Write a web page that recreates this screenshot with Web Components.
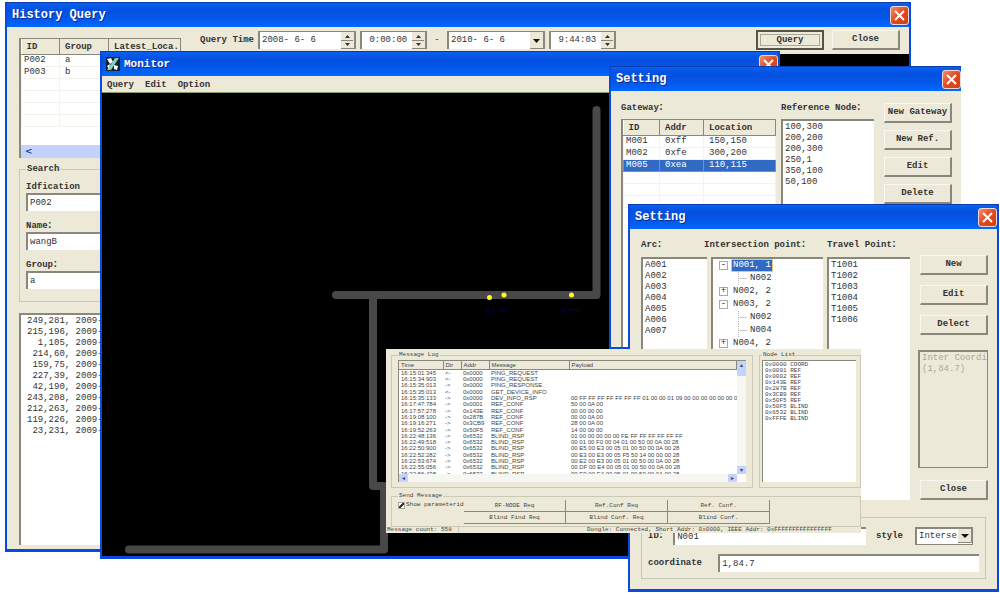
<!DOCTYPE html>
<html lang="en">
<head>
<meta charset="utf-8">
<title>Location monitor</title>
<style>
html, body { margin: 0; background: #fff; }
body { font: 9px/11px "Liberation Mono", "Noto Sans CJK SC", monospace; color: #333; }
</style>
</head>
<body>
<location-desktop></location-desktop>
<script>
const define = (name, html, setup) => {
  const template = document.createElement('template');
  template.innerHTML = `<style>
    *, *::before { box-sizing: border-box; }
    :host { display: block; box-sizing: border-box; }
    input, select, button { font: inherit; color: inherit; margin: 0; border-radius: 0; }
  </style>` + html;
  customElements.define(name, class extends HTMLElement {
    constructor() {
      super();
      this.attachShadow({ mode: 'open' }).append(template.content.cloneNode(true));
    }
    connectedCallback() { if (setup) setup(this, this.shadowRoot); }
  });
};

/* Window frame with a blue title bar and a close button */
define('xp-window', `<style>
  :host { display: flex; flex-direction: column; background: #ece9d8; border: solid #0a48e0; border-width: 1px 2px 3px; border-top-color: #0a3ab0; }
  header { display: flex; align-items: center; gap: 4px; flex: none; height: 24px; padding: 0 0 0 5px;
    background: linear-gradient(#0a60f0, #0450e0 30%, #0456e8 60%, #0068ff); color: #fff; font: bold 12px/16px "Liberation Mono", monospace; text-shadow: 1px 1px #0a2a90; }
  :host([compact]) header { font-size: 11px; }
  h2 { flex: 1; margin: 0; font: inherit; }
  button { width: 19px; height: 19px; padding: 0; border: 1px solid #f4d8d0; border-radius: 3px; background: linear-gradient(135deg, #f09070, #e04a20 50%, #d04010); }
  svg { display: block; margin: auto; }
  main { flex: 1; min-height: 0; display: flex; flex-direction: column; }
</style>
<header><slot name="icon"></slot><h2></h2><button type="button" aria-label="Close window"><svg width="13" height="13" viewBox="0 0 13 13"><path d="M2 2l9 9M11 2l-9 9" stroke="#fff" stroke-width="2"/></svg></button></header>
<main><slot></slot></main>`, (host, root) => { root.querySelector('h2').textContent = host.getAttribute('heading'); });

define('xp-button', `<style>
  button { display: block; width: 100%; height: 20px; padding: 0 2px; border: solid; border-width: 1px 2px 2px 1px; border-color: #faf8f0 #8a887c #8a887c #faf8f0; background: #ece9d8; white-space: nowrap; font-weight: bold; }
  :host([focused]) button { border: 2px solid #55534a; outline: 1px solid #aca899; outline-offset: -5px; }
  :host([small]) button { height: 12px; font-size: 6px; line-height: 8px; font-weight: normal; border-width: 0 1px 1px 0; }
</style><button type="button"><slot></slot></button>`);

/* Labelled text box; trim="spin" or trim="drop" adds the control at its right end */
define('xp-field', `<style>
  :host { display: flex; align-items: center; }
  :host([stacked]) { flex-direction: column; align-items: stretch; }
  label { font-weight: bold; flex: none; white-space: pre; line-height: 11px; height: 11px; }
  label:empty { display: none; }
  .box { display: flex; flex: 1 1 auto; min-width: 0; height: 18px; background: #fff; border: solid #8a887c; border-width: 2px 0 0 2px; }
  :host([stacked]) .box { flex: none; }
  input { flex: 1; width: 100%; min-width: 0; padding: 0 2px; border: 0; background: none; outline: 0; white-space: pre; }
  .end { display: none; flex: none; padding: 0; border: solid #8a887c; border-width: 0 1px 1px 0; background: #ece9d8; }
  :host([trim]) .box { border-width: 1px 1px 0 2px; }
  :host([trim]) input { padding-bottom: 1px; }
  :host([trim]) .end { display: block; width: 14px; }
</style><label for="i"></label><span class="box"><input id="i"><button class="end" type="button" aria-label="Change value"></button></span>`,
(host, root) => {
  root.querySelector('label').textContent = host.getAttribute('label') || '';
  const input = root.querySelector('input');
  input.value = host.getAttribute('value');
  input.setAttribute('aria-label', host.getAttribute('label') || host.getAttribute('hint') || 'Value');
  const trim = host.getAttribute('trim');
  if (trim) root.querySelector('.end').innerHTML = trim === 'drop'
    ? '<svg width="12" height="14" viewBox="0 0 12 14" style="display:block"><path d="M3 6h7l-3.500 4z" fill="#111"/></svg>'
    : '<svg width="12" height="14" viewBox="0 0 12 14" style="display:block"><path d="M4 5l2.500-3 2.500 3zM4 10l2.500 3 2.500-3z" fill="#333"/><path d="M0 7.500h13" stroke="#8a887c"/></svg>';
});

/* White sunken list; one row for each part of the rows attribute */
define('xp-list', `<style>
  :host { background: #fff; border: solid #8a887c; border-width: 2px 0 0 2px; overflow: hidden; }
  ul { list-style: none; margin: 0; padding: 1px 2px; white-space: pre; }
</style><ul></ul>`, (host, root) => {
  const ul = root.querySelector('ul');
  for (const line of host.getAttribute('rows').split('|')) {
    const li = document.createElement('li');
    li.textContent = line;
    ul.append(li);
  }
});

define('xp-group', `<style>
  fieldset { height: 100%; min-width: 0; margin: 0; padding: 0 6px; border: 1px solid #cbc8b6; }
  legend { padding: 0 1px; font-weight: bold; }
  :host([small]) legend { font-size: 6px; line-height: 8px; font-weight: normal; }
  :host([tight]) fieldset { padding: 0 4px 0 2px; }
  :host([plain]) legend { display: none; }
</style><fieldset><legend></legend><slot></slot></fieldset>`, (host, root) => {
  root.querySelector('legend').textContent = host.getAttribute('legend') || '';
});

/* Table with heading cells, ruled rows and an optional selected row */
define('xp-table', `<style>
  :host { background: #fff; border: solid #8a887c; border-width: 1px 0 0 2px; overflow: hidden; }
  table { width: 100%; table-layout: fixed; border-collapse: collapse; }
  th { height: 15px; padding: 2px 5px 0; text-align: left; background: #ece9d8; border: solid #8a887c; border-width: 0 1px 1px 0; white-space: nowrap; overflow: hidden; }
  td { height: 12px; padding: 0 5px 0 2px; border: 1px solid #f4f2ea; white-space: pre; overflow: hidden; }
  td:not(:first-child) { padding-left: 5px; }
  tr.on td { background: #316ac5; color: #fff; border-color: #6a90d0; }
</style><table><thead><tr></tr></thead><tbody></tbody></table><slot></slot>`, (host, root) => {
  const widths = host.getAttribute('widths').split(' ');
  const cells = (tr, tag, text) => text.split(';').forEach((t, i) => {
    const c = document.createElement(tag);
    c.textContent = t;
    if (tag === 'th' && widths[i] !== '*') c.style.width = widths[i] + 'px';
    tr.append(c);
  });
  cells(root.querySelector('thead tr'), 'th', host.getAttribute('head'));
  host.getAttribute('rows').split('|').forEach((row, i) => {
    const tr = document.createElement('tr');
    if (String(i) === host.getAttribute('selected')) tr.className = 'on';
    cells(tr, 'td', row);
    root.querySelector('tbody').append(tr);
  });
});

define('history-query', `<style>
  .grid { flex: 1; display: grid; grid-template-columns: 162px 1fr; column-gap: 9px; padding-left: 12px; }
  .left { display: flex; flex-direction: column; padding: 11px 0 4px; }
  xp-table { height: 120px; display: flex; flex-direction: column; }
  .scroll { margin-top: auto; height: 13px; display: flex; background: #c3d3fd; color: #23408c; font: bold 9px/12px "DejaVu Sans", sans-serif; padding-left: 4px; }
  .search { height: 138px; margin: 6px 0 11px; }
  .fields { display: grid; gap: 10px; padding-top: 7px; }
  .left xp-list { flex: 1; padding-left: 4px; }
  .right { display: flex; flex-direction: column; }
  .bar { display: flex; align-items: center; height: 26px; padding: 0 9px 0 10px; gap: 4px; }
  .date { width: 98px; } .time { width: 67px; }
  .bar .dash { width: 12px; text-align: center; }
  .bar xp-button { width: 68px; }
  .first { margin-left: auto; margin-right: 4px; }
  .map { flex: 1; background: #000; margin-top: 1px; }
</style>
<xp-window heading="History Query" style="height:100%"><div class="grid">
  <div class="left">
    <xp-table head="ID;Group;Latest_Loca." widths="38 49 *" rows="P002;a;|P003;b;| ;;| ;;| ;;| ;;"><div class="scroll">&lt;</div></xp-table>
    <xp-group class="search" legend="Search"><div class="fields">
      <xp-field stacked label="Idfication" value="P002"></xp-field>
      <xp-field stacked label="Name：" value="wangB"></xp-field>
      <xp-field stacked label="Group：" value="a"></xp-field>
    </div></xp-group>
    <xp-list rows="249,281, 2009-|215,196, 2009-|  1,105, 2009-| 214,60, 2009-| 159,75, 2009-| 227,39, 2009-| 42,190, 2009-|243,208, 2009-|212,263, 2009-|119,226, 2009-| 23,231, 2009-"></xp-list>
  </div>
  <div class="right">
    <div class="bar"><b>Query Time</b>
      <xp-field class="date" trim="spin" hint="From date" value="2008- 6- 6"></xp-field>
      <xp-field class="time" trim="spin" hint="From time" value=" 0:00:00"></xp-field>
      <span class="dash">-</span>
      <xp-field class="date" trim="drop" hint="To date" value="2010- 6- 6"></xp-field>
      <xp-field class="time" trim="spin" hint="To time" value=" 9:44:03"></xp-field>
      <xp-button class="first" focused>Query</xp-button><xp-button>Close</xp-button>
    </div>
    <div class="map"></div>
  </div>
</div></xp-window>`);

define('monitor-window', `<style>
  nav { display: flex; gap: 11px; height: 17px; padding: 4px 5px 0; border-bottom: 1px solid #8a9a60; }
  a { color: inherit; text-decoration: none; font-weight: bold; }
  .plan { display: block; flex: 1; background: #000; }
</style>
<xp-window compact heading="Monitor" style="height:100%">
  <svg slot="icon" width="14" height="14" viewBox="0 0 14 14" style="margin-left:-1px"><rect width="14" height="14" fill="#123"/><path d="M1 2l4-1 2 4-3 2zM8 8l4 1-1 4-3-1z" fill="#fff"/><path d="M9 1h4L5 13H1z" fill="#7fd0b8"/><path d="M1 9l3-2-1 5z" fill="#fff"/></svg>
  <nav><a href="#query">Query</a><a href="#edit">Edit</a><a href="#option">Option</a></nav>
  <svg class="plan" viewBox="102 93 676 463" preserveAspectRatio="xMinYMin slice" role="img" aria-label="Floor plan">
    <g fill="none" stroke="#484848" stroke-width="8" stroke-linecap="round" stroke-linejoin="round">
      <path d="M596.500 110V295H336"/><path d="M373 295V486H384V549.500H129"/>
    </g>
    <g fill="#ff2"><circle cx="489.500" cy="297.500" r="2.500"/><circle cx="504" cy="295" r="2.500"/><circle cx="571.500" cy="295" r="2.500"/></g>
    <g fill="#000028"><path d="M486 308h3v5h-3zM493 307h2v6h-2zM500 308h6v4h-6zM561 308h4v5h-4zM568 309h6v2h-6zM577 307h2v5h-2z"/></g>
  </svg>
</xp-window>`);

define('gateway-setting', `<style>
  .row { flex: 1; display: grid; grid-template-columns: 155px 93px 68px; gap: 5px; padding: 12px 10px 0; }
  .col { display: flex; flex-direction: column; gap: 5px; }
  .col > :last-child { flex: 1; }
  .col b { white-space: nowrap; height: 11px; }
  .buttons { display: flex; flex-direction: column; gap: 7px; padding-left: 5px; width: 73px; }
</style>
<xp-window heading="Setting" style="height:100%; border-right-width:0"><div class="row">
  <div class="col"><b>Gateway：</b><xp-table head="ID;Addr;Location" widths="36 44 *" selected="2" rows="M001;0xff;150,150|M002;0xfe;300,200|M005;0xea;110,115| ;;| ;;| ;;"></xp-table></div>
  <div class="col"><b>Reference Node：</b><xp-list rows="100,300|200,200|200,300|250,1|350,100|50,100"></xp-list></div>
  <div class="buttons"><xp-button>New Gateway</xp-button><xp-button>New Ref.</xp-button><xp-button>Edit</xp-button><xp-button>Delete</xp-button></div>
</div></xp-window>`);

/* Tree of intersection points with expand boxes and dotted branches */
define('point-tree', `<style>
  :host { background: #fff; border: solid #8a887c; border-width: 2px 0 0 2px; overflow: hidden; padding-left: 6px; }
  ul { list-style: none; margin: 0; padding: 0; }
  li { display: flex; align-items: center; gap: 5px; height: 13px; white-space: pre; }
  li.child { padding-left: 19px; gap: 2px; }
  li.child::before { content: ""; width: 10px; height: 13px; border: dotted #bbb; border-width: 0 0 0 1px; background: linear-gradient(#ccc, #ccc) 0 6px / 8px 1px no-repeat; }
  button { width: 9px; height: 9px; padding: 0; border: 1px solid #aaa; background: #fff; font: 9px/7px "Liberation Mono", monospace; }
  .on { background: #316ac5; color: #fff; outline: 1px solid #e8c878; padding: 0 1px; margin-left: -1px; }
</style><ul>
<li><button type="button">-</button><span class="on">N001, 1</span></li><li class="child">N002</li>
<li><button type="button">+</button>N002, 2</li>
<li><button type="button">-</button>N003, 2</li><li class="child">N002</li><li class="child">N004</li>
<li><button type="button">+</button>N004, 2</li></ul>`);

define('point-setting', `<style>
  .body { flex: 1; display: flex; flex-direction: column; gap: 17px; padding: 11px 11px 10px; }
  .top { display: grid; grid-template-columns: 66px 112px 83px 71px; column-gap: 4px; height: 260px; }
  .col { display: flex; flex-direction: column; gap: 6px; min-width: 0; }
  .col > :last-child { flex: 1; }
  .col b { white-space: nowrap; height: 11px; }
  .col.mid b { margin-left: -7px; }
  .buttons { display: flex; flex-direction: column; gap: 10px; padding: 15px 0 0 4px; width: 74px; }
  .buttons xp-button { padding-left: 2px; }
  .note { flex: 1; margin: 5px 0 2px; padding: 1px 2px; border: solid #8a887c; border-width: 2px 1px 1px 2px; color: #aca899; white-space: pre; overflow: hidden; }
  xp-group { flex: 1; }
  .line { display: flex; align-items: center; padding-top: 9px; }
  .id { flex: 1; }
  label { font-weight: bold; margin: 0 12px 0 10px; }
  .combo { display: flex; position: relative; width: 58px; margin-right: 6px; }
  select { appearance: none; width: 100%; height: 18px; padding: 0 0 0 2px; border: solid #8a887c; border-width: 2px 1px 1px 2px; background: #fff; }
  .combo svg { position: absolute; right: 1px; top: 2px; pointer-events: none; }
</style>
<xp-window heading="Setting" style="height:100%"><div class="body">
  <div class="top">
    <div class="col"><b>Arc：</b><xp-list rows="A001|A002|A003|A004|A005|A006|A007"></xp-list></div>
    <div class="col mid"><b>Intersection point：</b><point-tree></point-tree></div>
    <div class="col"><b>Travel Point：</b><xp-list rows="T1001|T1002|T1003|T1004|T1005|T1006"></xp-list></div>
    <div class="buttons"><xp-button>New</xp-button><xp-button>Edit</xp-button><xp-button>Delect</xp-button>
      <div class="note">Inter Coordi
(1,84.7)</div><xp-button>Close</xp-button></div>
  </div>
  <xp-group plain>
    <div class="line"><xp-field class="id" label="ID： " value="N001"></xp-field><label for="style">style</label>
      <span class="combo"><select id="style"><option>Interse</option></select><svg width="14" height="14" viewBox="0 0 14 14"><path d="M0 0h14v14H0z" fill="#ece9d8"/><path d="M0 13.500h13.500V0" fill="none" stroke="#8a887c"/><path d="M3 5h8l-4 4z" fill="#111"/></svg></span></div>
    <div class="line"><xp-field class="id" label="coordinate   " value="1,84.7"></xp-field></div>
  </xp-group>
</div></xp-window>`);

const fs = '00 05 01 00 50 00 0A 00 28';
const logRows = [
  ['16:15:01:345', '<-', '0x0000', 'PING_REQUEST', ''], ['16:15:34:903', '<-', '0x0000', 'PING_REQUEST', ''],
  ['16:15:35:013', '->', '0x0000', 'PING_RESPONSE', ''], ['16:15:35:013', '<-', '0x0000', 'GET_DEVICE_INFO', ''],
  ['16:15:35:133', '->', '0x0000', 'DEV_INFO_RSP', '00 FF FF FF FF FF FF FF 01 00 00 01 09 00 00 00 00 00 00 0'],
  ['16:17:47:784', '->', '0x0001', 'REF_CONF', '50 00 0A 00'], ['16:17:57:278', '->', '0x143E', 'REF_CONF', '00 00 00 00'],
  ['16:19:08:100', '->', '0x287B', 'REF_CONF', '00 00 0A 00'], ['16:19:16:271', '->', '0x3CB9', 'REF_CONF', '28 00 0A 00'],
  ['16:19:52:263', '->', '0x50F5', 'REF_CONF', '14 00 00 00'],
  ['16:22:48:136', '->', '0x6532', 'BLIND_RSP', '01 00 00 00 00 00 FE FF FF FF FF FF FF'],
  ['16:22:49:518', '->', '0x6532', 'BLIND_RSP', '00 01 00 F0 00 04 01 00 50 00 0A 00 28'],
  ['16:22:50:900', '->', '0x6532', 'BLIND_RSP', '00 E5 00 E3 ' + fs],
  ['16:22:52:282', '->', '0x6532', 'BLIND_RSP', '00 E3 00 E3 00 05 F5 50 14 00 00 00 28'],
  ['16:22:53:674', '->', '0x6532', 'BLIND_RSP', '00 E2 00 E3 ' + fs],
  ['16:22:55:056', '->', '0x6532', 'BLIND_RSP', '00 DF 00 E4 ' + fs],
  ['16:22:56:438', '->', '0x6532', 'BLIND_RSP', '00 E0 00 E4 ' + fs],
];

define('message-log', `<style>
  :host { display: flex; flex-direction: column; background: #ece9d8; overflow: hidden; font-size: 6px; line-height: 6px; padding: 2px 0 0 5px; color: #444; }
  .top { display: grid; grid-template-columns: 1fr 102px; gap: 6px; height: 137px; }
  .frame { display: grid; grid-template-columns: 1fr 9px; grid-template-rows: 113px 8px; border: solid #8a887c; border-width: 1px 0 0 1px; background: #fff; margin-top: 1px; }
  .clip { overflow: hidden; }
  table { width: 100%; height: 116px; table-layout: fixed; border-collapse: collapse; font: 6px/6px "Liberation Sans", sans-serif; }
  th { height: 8px; padding: 0 2px; background: #ece9d8; text-align: left; font-weight: normal; border: solid #8a887c; border-width: 0 1px 1px 0; }
  td { padding: 0 2px; white-space: nowrap; overflow: hidden; }
  .v, .h { display: flex; justify-content: space-between; background: #f6f6f2; }
  .v { flex-direction: column; }
  i { display: block; width: 9px; height: 8px; background: #c3d3fd; color: #345; font: 6px/8px "DejaVu Sans", sans-serif; text-align: center; }
  .v i:first-child { height: 15px; }
  .nodes { height: 122px; margin-top: 1px; border-width: 1px 0 0 1px; }
  .send { height: 35px; margin-top: 4px; }
  .cols { display: grid; grid-template-columns: 66px 306px; }
  label { display: flex; align-items: center; gap: 1px; height: 10px; white-space: nowrap; }
  input { width: 7px; height: 7px; appearance: none; flex: none; border: 1px solid #aca899; background: #fff; }
  input:checked { background: linear-gradient(135deg, #fff 35%, #333 40% 60%, #fff 65%); }
  .btns { display: grid; grid-template-columns: repeat(3, 1fr); }
  .status { display: flex; white-space: nowrap; margin: 0 0 0 -4px; }
  .status span:first-child { width: 72px; border-right: 1px solid #cbc8b6; }
  .status span:last-child { margin-left: 128px; }
</style>
<div class="top">
  <xp-group small legend="Message Log"><div class="frame">
    <div class="clip"><table><thead><tr><th style="width:44px">Time</th><th style="width:18px">Dir</th><th style="width:28px">Addr</th><th style="width:80px">Message</th><th>Payload</th></tr></thead><tbody></tbody></table></div>
    <div class="v"><i>▴</i><i>▾</i></div><div class="h"><i>◂</i><i>▸</i></div>
  </div></xp-group>
  <xp-group small tight legend="Node List"><xp-list class="nodes" rows="0x0000 COORD|0x0001 REF|0x0002 REF|0x143E REF|0x287B REF|0x3CB9 REF|0x50F5 REF|0x50F5 BLIND|0x6532 BLIND|0xFFFE BLIND"></xp-list></xp-group>
</div>
<xp-group class="send" small legend="Send Message"><div class="cols">
  <label><input type="checkbox" checked>Show parameterid</label>
  <div class="btns"><xp-button small>RF-NODE Req</xp-button><xp-button small>Ref.Conf Req</xp-button><xp-button small>Ref. Conf.</xp-button><xp-button small>Blind Find Req</xp-button><xp-button small>Blind Conf. Req</xp-button><xp-button small>Blind Conf.</xp-button></div>
</div></xp-group>
<div class="status"><span>Message count: 558</span><span>Dongle: Connected, Short Addr: 0x0000, IEEE Addr: 0xFFFFFFFFFFFFFFFF</span></div>`,
(host, root) => {
  for (const row of logRows) {
    const tr = document.createElement('tr');
    for (const text of row) tr.append(Object.assign(document.createElement('td'), { textContent: text }));
    root.querySelector('tbody').append(tr);
  }
});

/* Desktop: overlapping windows, each at its own place */
define('location-desktop', `<style>
  :host { position: relative; min-height: 100vh; overflow: hidden; }
  .w { position: absolute; }
  .history { left: 5px; top: 2px; width: 906px; height: 550px; }
  .monitor { left: 100px; top: 51px; width: 680px; height: 508px; }
  .gateway { left: 609px; top: 66px; width: 352px; height: 284px; }
  .points { left: 628px; top: 204px; width: 371px; height: 388px; }
  .log { left: 386px; top: 349px; width: 475px; height: 184px; }
</style>
<history-query class="w history"></history-query>
<monitor-window class="w monitor"></monitor-window>
<gateway-setting class="w gateway"></gateway-setting>
<point-setting class="w points"></point-setting>
<message-log class="w log"></message-log>`);
</script>
</body>
</html>
